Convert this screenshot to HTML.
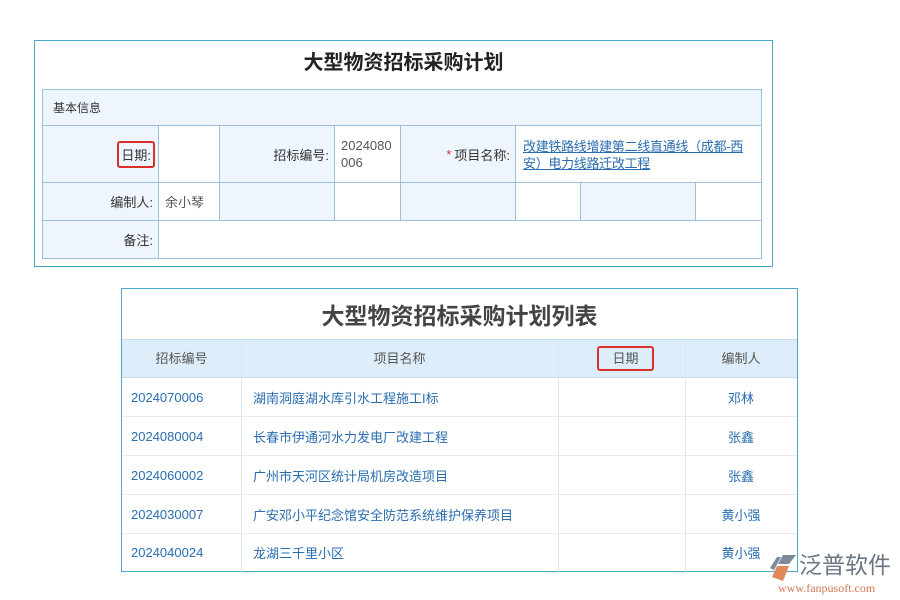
<!DOCTYPE html>
<html><head><meta charset="utf-8"><style>
*{margin:0;padding:0;box-sizing:border-box}
body{width:900px;height:600px;background:#fff;position:relative;font-family:"Liberation Sans","Noto Sans CJK SC",sans-serif;overflow:hidden;color:#333}
.a{position:absolute}
.c{position:absolute;border:1px solid #9dbfd8;font-size:13px;display:flex;align-items:center}
.l{background:#eef5fc;justify-content:flex-end;padding-right:5px}
.w{background:#fff;padding-left:6px}
.t{position:absolute;font-size:13px;display:flex;align-items:center;border-bottom:1px solid #e8ecef;color:#2a6db0}
</style></head><body>
<div class="a" style="left:34px;top:40px;width:739px;height:227px;border:1px solid #4aa8c8"></div>
<div class="a" style="left:34px;top:46px;width:739px;text-align:center;font-size:20px;font-weight:bold;color:#222">大型物资招标采购计划</div>
<div class="c" style="left:42px;top:89px;width:720px;height:37px;background:#eef5fc;padding-left:10px;font-size:12px">基本信息</div>
<div class="c l" style="left:42px;top:125px;width:117px;height:58px;padding-right:3px"><span style="border:2px solid #d9302c;border-radius:3px;padding:2px 2px">日期:</span></div>
<div class="c w" style="left:158px;top:125px;width:62px;height:58px"></div>
<div class="c l" style="left:219px;top:125px;width:116px;height:58px">招标编号:</div>
<div class="c w" style="left:334px;top:125px;width:67px;height:58px;align-items:flex-start;padding-top:11px;color:#555;line-height:17px">2024080<br>006</div>
<div class="c l" style="left:400px;top:125px;width:116px;height:58px"><span style="color:#d9302c;margin-right:3px">*</span>项目名称:</div>
<div class="c w" style="left:515px;top:125px;width:247px;height:58px;align-items:flex-start;padding-top:12px;color:#2a6db0;text-decoration:underline;line-height:17px;padding-left:7px;padding-right:2px;letter-spacing:-0.3px">改建铁路线增建第二线直通线（成都-西<br>安）电力线路迁改工程</div>
<div class="c l" style="left:42px;top:182px;width:117px;height:39px">编制人:</div>
<div class="c w" style="left:158px;top:182px;width:62px;height:39px;color:#555">余小琴</div>
<div class="c l" style="left:219px;top:182px;width:116px;height:39px"></div>
<div class="c w" style="left:334px;top:182px;width:67px;height:39px"></div>
<div class="c l" style="left:400px;top:182px;width:116px;height:39px"></div>
<div class="c w" style="left:515px;top:182px;width:66px;height:39px"></div>
<div class="c l" style="left:580px;top:182px;width:116px;height:39px"></div>
<div class="c w" style="left:695px;top:182px;width:67px;height:39px"></div>
<div class="c l" style="left:42px;top:220px;width:117px;height:39px">备注:</div>
<div class="c w" style="left:158px;top:220px;width:604px;height:39px"></div>

<div class="a" style="left:121px;top:288px;width:677px;height:284px;border:1px solid #4aa8c8"></div>
<div class="a" style="left:121px;top:297px;width:677px;text-align:center;font-size:23px;font-weight:bold;color:#444">大型物资招标采购计划列表</div>
<div class="a" style="left:122px;top:339px;width:675px;height:39px;background:#ddeefa;border-top:1px solid #c6dcec;border-bottom:1px solid #c6dcec"></div>
<div class="a" style="left:241px;top:339px;width:1px;height:233px;background:#dde6ee"></div>
<div class="a" style="left:558px;top:339px;width:1px;height:233px;background:#dde6ee"></div>
<div class="a" style="left:685px;top:339px;width:1px;height:233px;background:#dde6ee"></div>
<div class="a" style="left:122px;top:348px;width:119px;text-align:center;font-size:13px;color:#555">招标编号</div>
<div class="a" style="left:241px;top:348px;width:317px;text-align:center;font-size:13px;color:#555">项目名称</div>
<div class="a" style="left:597px;top:346px;width:57px;height:25px;border:2px solid #d9302c;border-radius:3px;text-align:center;font-size:13px;line-height:21px;color:#555">日期</div>
<div class="a" style="left:685px;top:348px;width:112px;text-align:center;font-size:13px;color:#555">编制人</div>

<div class="t" style="left:122px;top:378px;width:675px;height:39px"><span style="width:119px;padding-left:9px">2024070006</span><span style="width:317px;padding-left:12px">湖南洞庭湖水库引水工程施工I标</span><span style="width:127px"></span><span style="width:112px;text-align:center">邓林</span></div>
<div class="t" style="left:122px;top:417px;width:675px;height:39px"><span style="width:119px;padding-left:9px">2024080004</span><span style="width:317px;padding-left:12px">长春市伊通河水力发电厂改建工程</span><span style="width:127px"></span><span style="width:112px;text-align:center">张鑫</span></div>
<div class="t" style="left:122px;top:456px;width:675px;height:39px"><span style="width:119px;padding-left:9px">2024060002</span><span style="width:317px;padding-left:12px">广州市天河区统计局机房改造项目</span><span style="width:127px"></span><span style="width:112px;text-align:center">张鑫</span></div>
<div class="t" style="left:122px;top:495px;width:675px;height:39px"><span style="width:119px;padding-left:9px">2024030007</span><span style="width:317px;padding-left:12px">广安邓小平纪念馆安全防范系统维护保养项目</span><span style="width:127px"></span><span style="width:112px;text-align:center">黄小强</span></div>
<div class="t" style="left:122px;top:534px;width:675px;height:37px;border-bottom:none"><span style="width:119px;padding-left:9px">2024040024</span><span style="width:317px;padding-left:12px">龙湖三千里小区</span><span style="width:127px"></span><span style="width:112px;text-align:center">黄小强</span></div>

<svg class="a" style="left:768px;top:553px" width="32" height="30" viewBox="0 0 32 30"><path d="M15 2 L28 2 L21 11 L10 11 Z" fill="#7d8a99"/><path d="M9 13 L21 13 L15 28 L4 24 Z" fill="#e08a5a"/><path d="M2 15 L9 4 L13 4 L6 17 Z" fill="#7d8a99"/></svg>
<div class="a" style="left:799px;top:552px;font-size:23px;line-height:26px;color:#6b7684;white-space:nowrap">泛普软件</div>
<div class="a" style="left:778px;top:581px;font-size:12px;color:#d07a56;font-family:'Liberation Serif',serif;white-space:nowrap">www.fanpusoft.com</div>
</body></html>
